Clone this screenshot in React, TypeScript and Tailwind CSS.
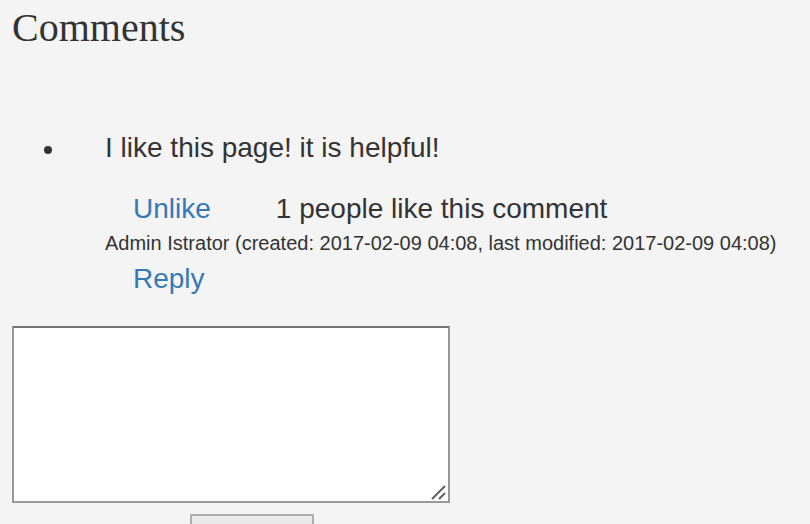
export default function App() {
  return (
    <div className="min-h-[524px] bg-[#f4f4f4] pt-[6px] pl-[12px] text-[#333] font-['Liberation_Sans',Arial,sans-serif]">
      <h2 className="font-['Liberation_Serif','Times_New_Roman',serif] text-[40px] leading-[44px] font-normal">
        Comments
      </h2>

      <ul className="mt-[78px]">
        <li className="flex">
          <div className="w-[93px] shrink-0 pl-[32px] pt-[18px]">
            <span className="block h-[8px] w-[8px] rounded-full bg-[#333]" />
          </div>
          <div>
            <p className="text-[28px] leading-[40px]">I like this page! it is helpful!</p>
            <div className="mt-[21px] flex pl-[28px] text-[28px] leading-[40px]">
              <a href="#" className="text-[#337ab7]">Unlike</a>
              <span className="ml-[65px]">1 people like this comment</span>
            </div>
            <p className="mt-0 text-[20px] leading-[28px]">
              Admin Istrator (created: 2017-02-09 04:08, last modified: 2017-02-09 04:08)
            </p>
            <div className="mt-[2px] pl-[28px] text-[28px] leading-[40px]">
              <a href="#" className="text-[#337ab7]">Reply</a>
            </div>
          </div>
        </li>
      </ul>

      <form className="mt-[27px]">
        <div className="relative w-[438px]">
          <textarea className="block h-[177px] w-[438px] resize-none border-2 border-[#999] border-t-[#767676] bg-white outline-none" />
          <svg className="absolute right-[3px] bottom-[3px]" width="16" height="16" viewBox="0 0 16 16">
            <line x1="1" y1="15" x2="14" y2="2" stroke="#5f5f5f" strokeWidth="2" />
            <line x1="8" y1="15" x2="14" y2="9" stroke="#5f5f5f" strokeWidth="2" />
          </svg>
        </div>
        <button
          type="button"
          aria-label="Submit"
          className="mt-[11px] ml-[178px] block h-[36px] w-[124px] border-2 border-[#adadad] bg-gradient-to-b from-[#ececec] to-[#dcdcdc]"
        />
      </form>
    </div>
  );
}
